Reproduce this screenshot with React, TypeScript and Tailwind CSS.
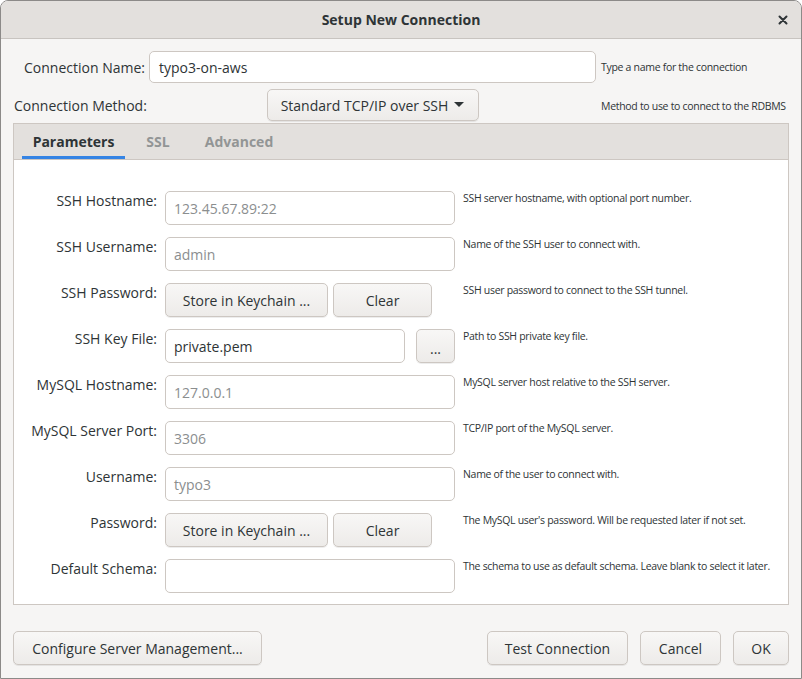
const btn =
    'flex items-center justify-center rounded-[5px] border border-[#cdc7c2] bg-gradient-to-b from-[#f8f7f6] to-[#edebe9] text-[14px] text-[#2e3436] shadow-[0_1px_0_rgba(0,0,0,0.07)]'
const input = 'flex h-[34px] items-center rounded-[5px] border border-[#cdc7c2] bg-white px-2 text-[14px]'
const help = 'whitespace-nowrap text-[10.5px] tracking-[-0.3px] text-[#2e3436]'

type Row = {
    label: string
    help: string
    kind: 'text' | 'keychain' | 'file'
    value?: string
    dim?: boolean
}

const rows: Row[] = [
    { label: 'SSH Hostname:', help: 'SSH server hostname, with  optional port number.', kind: 'text', value: '123.45.67.89:22', dim: true },
    { label: 'SSH Username:', help: 'Name of the SSH user to connect with.', kind: 'text', value: 'admin', dim: true },
    { label: 'SSH Password:', help: 'SSH user password to connect to the SSH tunnel.', kind: 'keychain' },
    { label: 'SSH Key File:', help: 'Path to SSH private key file.', kind: 'file', value: 'private.pem' },
    { label: 'MySQL Hostname:', help: 'MySQL server host relative to the SSH server.', kind: 'text', value: '127.0.0.1', dim: true },
    { label: 'MySQL Server Port:', help: 'TCP/IP port of the MySQL server.', kind: 'text', value: '3306', dim: true },
    { label: 'Username:', help: 'Name of the user to connect with.', kind: 'text', value: 'typo3', dim: true },
    { label: 'Password:', help: "The MySQL user's password. Will be requested later if not set.", kind: 'keychain' },
    { label: 'Default Schema:', help: 'The schema to use as default schema. Leave blank to select it later.', kind: 'text', value: '' },
]

const FormRow = ({ row }: { row: Row }) => {
    return (
        <>
            <div className="text-right text-[14px] leading-[20px] text-[#2e3436]">{row.label}</div>
            {row.kind === 'text' && (
                <div className={input}>
                    <span className={row.dim ? 'text-[#8b8e8f]' : 'text-[#2e3436]'}>{row.value}</span>
                </div>
            )}
            {row.kind === 'keychain' && (
                <div className="flex gap-[5px]">
                    <div className={`${btn} h-[34px] w-[163px]`}>Store in Keychain ...</div>
                    <div className={`${btn} h-[34px] w-[99px]`}>Clear</div>
                </div>
            )}
            {row.kind === 'file' && (
                <div className="flex gap-[11px]">
                    <div className={`${input} w-[240px] text-[#2e3436]`}>{row.value}</div>
                    <div className={`${btn} h-[34px] w-[39px] pt-[4px] text-[10px]`}>...</div>
                </div>
            )}
            <div className={`${help} leading-[14px]`}>{row.help}</div>
        </>
    )
}

const App = () => {
    return (
        <div className="h-[679px] w-[802px] bg-white" style={{ fontFamily: '"Open Sans", "Noto Sans", sans-serif' }}>
            <div className="flex h-full w-full flex-col overflow-hidden rounded-t-[8px] border border-[#8c8a88] bg-[#f6f5f4]">
                <div className="grid h-[38px] shrink-0 grid-cols-[1fr_auto_1fr] items-center border-b border-[#c8c4c0] bg-[#e3e0dd]">
                    <div />
                    <div className="text-[14px] font-bold text-[#2e3436]">Setup New Connection</div>
                    <div className="flex justify-end pr-[13px]">
                        <svg width="10" height="10" viewBox="0 0 10 10">
                            <path d="M1.5 1.5 L8.5 8.5 M8.5 1.5 L1.5 8.5" stroke="#2e3436" strokeWidth="2" strokeLinecap="round" />
                        </svg>
                    </div>
                </div>

                <div className="flex flex-1 flex-col px-[12px] pt-[12px]">
                    <div className="grid grid-cols-[131px_447px_1fr] items-center gap-x-[4px] gap-y-[6px] pl-[1px]">
                        <div className="whitespace-nowrap text-right text-[14px] text-[#2e3436]">Connection Name:</div>
                        <div className="flex h-[32px] items-center rounded-[5px] border border-[#cdc7c2] bg-white px-[9px] text-[14px] text-[#2e3436]">
                            typo3-on-aws
                        </div>
                        <div className={`${help} pl-[1px] pt-[2px]`}>Type a name for the connection</div>

                        <div className="whitespace-nowrap text-[14px] text-[#2e3436]">Connection Method:</div>
                        <div className="flex justify-center">
                            <div className={`${btn} h-[32px] w-[212px] gap-[6px]`}>
                                <span>Standard TCP/IP over SSH</span>
                                <svg width="10" height="6" viewBox="0 0 10 6">
                                    <path d="M0 0 H10 L5 5 Z" fill="#2e3436" />
                                </svg>
                            </div>
                        </div>
                        <div className={`${help} pl-[1px] pt-[3px]`}>Method to use to connect to the RDBMS</div>
                    </div>

                    <div className="mt-[2px] border border-[#cdc7c2] bg-white">
                        <div className="flex h-[36px] items-stretch gap-[1px] border-b border-[#cdc7c2] bg-[#e3e0dd] px-[8px] text-[14px] font-bold">
                            <div className="flex w-[103px] items-center justify-center border-b-[3px] border-[#3584e4] pt-[3px] text-[#2e3436]">
                                Parameters
                            </div>
                            <div className="flex w-[64px] items-center justify-center text-[#929595]">SSL</div>
                            <div className="flex w-[96px] items-center justify-center text-[#929595]">Advanced</div>
                        </div>
                        <div className="grid grid-cols-[143px_290px_1fr] gap-x-[8px] gap-y-[12px] pb-[11px] pr-[8px] pt-[31px]">
                            {rows.map((row) => (
                                <FormRow key={row.label} row={row} />
                            ))}
                        </div>
                    </div>

                    <div className="mt-[26px] flex items-center">
                        <div className={`${btn} h-[34px] w-[249px]`}>Configure Server Management...</div>
                        <div className="flex-1" />
                        <div className={`${btn} h-[34px] w-[141px]`}>Test Connection</div>
                        <div className={`${btn} ml-[12px] h-[34px] w-[81px]`}>Cancel</div>
                        <div className={`${btn} ml-[12px] h-[34px] w-[56px]`}>OK</div>
                    </div>
                </div>
            </div>
        </div>
    )
}

export default App
